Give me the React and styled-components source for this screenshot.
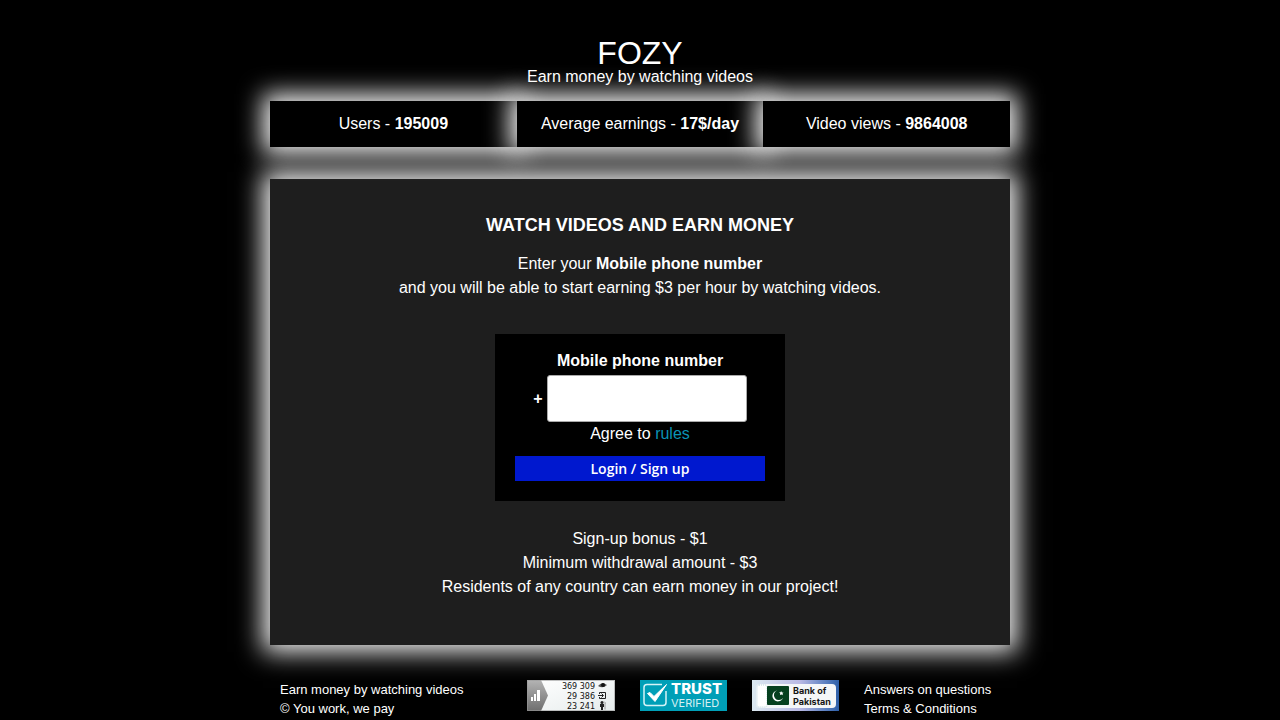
import React from "react";
import styled, { createGlobalStyle } from "styled-components";

const GlobalStyle = createGlobalStyle`
  * { box-sizing: border-box; }
  body {
    margin: 0;
    background: #000;
    color: #fff;
    font: 16px/24px "Liberation Sans", Arial, sans-serif;
  }
`;

const Page = styled.div`
  max-width: 740px;
  margin: 0 auto;
  padding-top: 37px;
`;

const Header = styled.header`
  text-align: center;
  margin-bottom: 16px;
`;

const Logo = styled.h1`
  margin: 0;
  font-size: 32px;
  font-weight: 400;
  line-height: 32px;
`;

const Tagline = styled.p`
  margin: 0;
  line-height: 16px;
`;

const glow = "0 0 24px 7px #f5f5f5";

const Stats = styled.ul`
  display: flex;
  list-style: none;
  margin: 0 0 32px;
  padding: 0;
`;

const Stat = styled.li`
  flex: 1;
  padding: 11px 0;
  text-align: center;
  background: #000;
  box-shadow: ${glow};
`;

const Panel = styled.main`
  padding: 34px 20px 46px;
  text-align: center;
  background: #1e1e1e;
  box-shadow: ${glow};
`;

const Heading = styled.h2`
  margin: 0 0 15px;
  font-size: 18px;
  line-height: 24px;
  text-transform: uppercase;
`;

const Text = styled.p`
  margin: 0;
`;

const LoginForm = styled.form`
  display: flex;
  flex-direction: column;
  align-items: center;
  max-width: 290px;
  margin: 34px auto 26px;
  padding: 15px 20px 20px;
  background: #000;
`;

const Label = styled.label`
  font-weight: 700;
`;

const PhoneRow = styled.div`
  display: flex;
  align-items: center;
  gap: 4px;
  margin-top: 2px;
  font-weight: 700;
`;

const PhoneInput = styled.input`
  width: 200px;
  height: 47px;
  padding: 0 10px;
  border: 1px solid #aaa;
  border-radius: 3px;
  background: #fff;
  font: inherit;
`;

const RulesLink = styled.a`
  color: #0b93b5;
  text-decoration: none;
`;

const SubmitButton = styled.button`
  width: 100%;
  height: 25px;
  margin-top: 10px;
  padding: 0;
  border: 0;
  background: #0018cf;
  color: #fff;
  font: 600 14px/25px "Open Sans", sans-serif;
  cursor: pointer;
`;

const Footer = styled.footer`
  display: flex;
  align-items: flex-start;
  margin-top: 35px;
  padding: 0 10px;
  font-size: 13px;
  line-height: 19px;
`;

const FooterText = styled.div`
  flex: 1;
`;

const Badges = styled.div`
  display: flex;
  gap: 25px;
  margin-right: 25px;
`;

const Badge = styled.svg`
  display: block;
  height: 31px;
`;

const FooterLinks = styled.nav`
  display: flex;
  flex-direction: column;
  width: 136px;
`;

const FooterLink = styled.a`
  color: #fff;
  text-decoration: none;
`;

const counters = ["369 309", "29 386", "23 241"];

function CounterBadge() {
  return (
    <Badge width="88" viewBox="0 0 88 31" role="img" aria-label="Visitor counter">
      <defs>
        <linearGradient id="paper" x1="0" y1="0" x2="1" y2="1">
          <stop offset="0" stopColor="#fff" />
          <stop offset="1" stopColor="#e6ecec" />
        </linearGradient>
        <linearGradient id="arrow" x1="0" y1="0" x2="0" y2="1">
          <stop offset="0" stopColor="#b4b4b4" />
          <stop offset="1" stopColor="#6e6e6e" />
        </linearGradient>
      </defs>
      <rect width="88" height="31" fill="url(#paper)" />
      <path d="M0 0H14L21 15.5L14 31H0Z" fill="url(#arrow)" />
      <path d="M4 17h2v4H4zM7 14h2v7H7zM10 10h3v11h-3z" fill="#fff" />
      <g fontFamily="DejaVu Sans, sans-serif" fontSize="8" textAnchor="end" fill="#111">
        {counters.map((n, i) => (
          <text key={n} x="68" y={9 + i * 10}>{n}</text>
        ))}
      </g>
      <path d="M71 6q4-5 9-1q-4 4-9 1z" fill="#555" />
      <circle cx="76" cy="5" r="2" fill="#111" />
      <path d="M72.500 14V12.500h6v6h-6V17M71 15.500h5M74.500 13.500l2 2l-2 2" fill="none" stroke="#222" />
      <circle cx="75" cy="22.500" r="1.500" fill="#222" />
      <path d="M73 24h4v3h-1v3h-2v-3h-1z" fill="#222" />
      <path d="M77 21.500q2 1 1 3v5" fill="none" stroke="#999" />
      <rect x="0.500" y="0.500" width="87" height="30" fill="none" stroke="#999" strokeOpacity="0.6" />
    </Badge>
  );
}

function TrustBadge() {
  return (
    <Badge width="87" viewBox="0 0 87 31" role="img" aria-label="Trust verified">
      <rect width="87" height="31" fill="#009fb7" />
      <path d="M22 4.500H7q-3 0-3 3v15q0 3 3 3h16q3 0 3-3V11" fill="none" stroke="#d5f3f7" strokeWidth="1.500" />
      <path d="M7.500 13.500L10 12.500L14 16.500L26.500 4.500L15 21.500Z" fill="#fff" stroke="#fff" />
      <g fontFamily="Inter, sans-serif" fill="#fff">
        <text x="31" y="14" fontSize="15" fontWeight="800">TRUST</text>
        <text x="31" y="27" fontSize="11" fillOpacity="0.85">VERIFIED</text>
      </g>
    </Badge>
  );
}

function BankBadge() {
  return (
    <Badge width="87" viewBox="0 0 87 31" role="img" aria-label="Bank of Pakistan">
      <defs>
        <linearGradient id="bank" x1="0" y1="0" x2="1" y2="0">
          <stop offset="0" stopColor="#dce9f0" />
          <stop offset="0.55" stopColor="#b9b9e4" />
          <stop offset="0.85" stopColor="#5a7fc0" />
          <stop offset="1" stopColor="#2c5ea8" />
        </linearGradient>
      </defs>
      <rect width="87" height="31" fill="url(#bank)" />
      <rect x="4" y="4" width="80" height="24" rx="4" fill="#f4f6f8" />
      <rect x="5" y="5" width="10" height="22" rx="2" fill="#fff" stroke="#bdd9e0" strokeDasharray="1 1" />
      <rect x="15" y="6" width="22" height="19" rx="1" fill="#06401f" />
      <path d="M25 10.500a5.500 5.500 0 1 0 6 7.500a5 5 0 1 1-6-7.500z" fill="#fff" />
      <path d="M29 11l1 1.500h1.500l-1 1.200l.4 1.500l-1.500-.7l-1.400.6l.2-1.600l-1-1.200l1.500-.1z" fill="#fff" />
      <g fontFamily="Inter, sans-serif" fontSize="9" fontWeight="700" fill="#151515">
        <text x="41" y="14">Bank of</text>
        <text x="41" y="25">Pakistan</text>
      </g>
    </Badge>
  );
}

export default function App() {
  return (
    <>
      <GlobalStyle />
      <Page>
        <Header>
          <Logo>FOZY</Logo>
          <Tagline>Earn money by watching videos</Tagline>
        </Header>
        <Stats>
          <Stat>Users - <b>195009</b></Stat>
          <Stat>Average earnings - <b>17$/day</b></Stat>
          <Stat>Video views - <b>9864008</b></Stat>
        </Stats>
        <Panel>
          <Heading>Watch videos and earn money</Heading>
          <Text>Enter your <b>Mobile phone number</b></Text>
          <Text>and you will be able to start earning $3 per hour by watching videos.</Text>
          <LoginForm onSubmit={(e) => e.preventDefault()}>
            <Label htmlFor="phone">Mobile phone number</Label>
            <PhoneRow>
              <span>+</span>
              <PhoneInput id="phone" type="tel" name="phone" />
            </PhoneRow>
            <Text>Agree to <RulesLink href="#rules">rules</RulesLink></Text>
            <SubmitButton type="submit">Login / Sign up</SubmitButton>
          </LoginForm>
          <Text>Sign-up bonus - $1</Text>
          <Text>Minimum withdrawal amount - $3</Text>
          <Text>Residents of any country can earn money in our project!</Text>
        </Panel>
        <Footer>
          <FooterText>
            Earn money by watching videos
            <br />© You work, we pay
          </FooterText>
          <Badges>
            <CounterBadge />
            <TrustBadge />
            <BankBadge />
          </Badges>
          <FooterLinks>
            <FooterLink href="#faq">Answers on questions</FooterLink>
            <FooterLink href="#terms">Terms &amp; Conditions</FooterLink>
          </FooterLinks>
        </Footer>
      </Page>
    </>
  );
}
